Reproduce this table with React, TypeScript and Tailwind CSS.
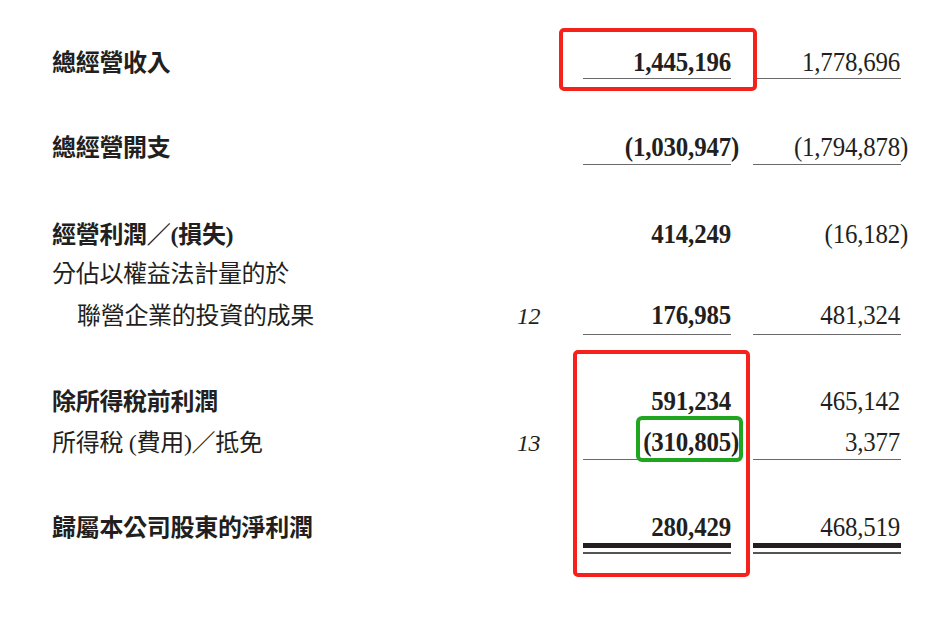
import React from "react";

type RowProps = {
  label: string;
  bold?: boolean;
  indent?: boolean;
  note?: string;
  v1?: string;
  v2?: string;
  line?: "single" | "double";
  pb?: string;
  className?: string;
};

function Num({ v, bold }: { v?: string; bold?: boolean }) {
  if (!v) return <span>&nbsp;</span>;
  const neg = v.endsWith(")");
  const body = neg ? v.slice(0, -1) : v;
  return (
    <span className={bold ? "font-bold" : "font-normal"}>
      {body}
      {neg && <span className="inline-block w-0">)</span>}
    </span>
  );
}

function Row({ label, bold, indent, note, v1, v2, line, pb = "mt-[1px]", className = "" }: RowProps) {
  const under = (
    <>
      {line === "single" && <div className={`${pb} h-px bg-[#6a6a6a]`} />}
      {line === "double" && (
        <>
          <div className="mt-[1px] h-[5px] bg-[#231f20]" />
          <div className="mt-[4px] h-[1.5px] bg-[#555]" />
        </>
      )}
    </>
  );
  return (
    <div className={`flex items-baseline ${className}`}>
      <div
        className={`w-[448px] flex-none text-[24px] leading-[28px] tracking-[-0.3px] text-[#231f20] ${
          bold ? "font-bold" : "font-normal"
        } ${indent ? "pl-[25px]" : ""}`}
        style={{ fontFamily: '"Liberation Serif", "Noto Sans CJK TC", serif' }}
      >
        {label}
      </div>
      <div className="w-[41px] flex-none pr-[1px] text-right text-[24px] leading-[30px] italic tracking-[-0.5px] text-[#231f20]">
        {note ?? "\u00a0"}
      </div>
      <div className="w-[42px] flex-none" />
      <div className="w-[148px] flex-none">
        <div className="origin-right scale-x-[0.89] text-right text-[28px] leading-[30px] tracking-[-0.2px] text-[#231f20]">
          <Num v={v1} bold />
        </div>
        {under}
      </div>
      <div className="w-[22px] flex-none" />
      <div className="w-[148px] flex-none">
        <div className="origin-right scale-x-[0.89] pr-[1px] text-right text-[28px] leading-[30px] tracking-[-0.2px] text-[#231f20]">
          <Num v={v2} />
        </div>
        {under}
      </div>
    </div>
  );
}

export default function App() {
  return (
    <div
      className="relative h-[621px] w-[951px] overflow-hidden bg-white pl-[52px] pt-[47px]"
      style={{ fontFamily: '"Liberation Serif", "Noto Sans CJK TC", serif' }}
    >
      <div className="flex flex-col">
        <Row label="總經營收入" bold v1="1,445,196" v2="1,778,696" line="single" pb="mt-[1px]" />
        <Row
          className="mt-[53px]"
          label="總經營開支"
          bold
          v1="(1,030,947)"
          v2="(1,794,878)"
          line="single"
          pb="mt-[2px]"
        />
        <Row className="mt-[54px]" label="經營利潤／(損失)" bold v1="414,249" v2="(16,182)" />
        <Row className="mt-[8px]" label="分佔以權益法計量的於" />
        <Row
          className="mt-[11px]"
          label="聯營企業的投資的成果"
          indent
          note="12"
          v1="176,985"
          v2="481,324"
          line="single"
          pb="mt-[4px]"
        />
        <Row className="mt-[51px]" label="除所得稅前利潤" bold v1="591,234" v2="465,142" />
        <Row
          className="mt-[10px]"
          label="所得稅 (費用)／抵免"
          note="13"
          v1="(310,805)"
          v2="3,377"
          line="single"
          pb="mt-[2px]"
        />
        <Row className="mt-[52px]" label="歸屬本公司股東的淨利潤" bold v1="280,429" v2="468,519" line="double" />
      </div>

      {/* highlight overlays */}
      <div className="pointer-events-none absolute left-[559px] top-[28px] h-[63px] w-[198px] rounded-[5px] border-4 border-[#f5221b]" />
      <div className="pointer-events-none absolute left-[573px] top-[350px] h-[227px] w-[177px] rounded-[5px] border-4 border-[#f5221b]" />
      <div className="pointer-events-none absolute left-[636px] top-[416px] h-[46px] w-[107px] rounded-[6px] border-4 border-[#1fa51f]" />
    </div>
  );
}
